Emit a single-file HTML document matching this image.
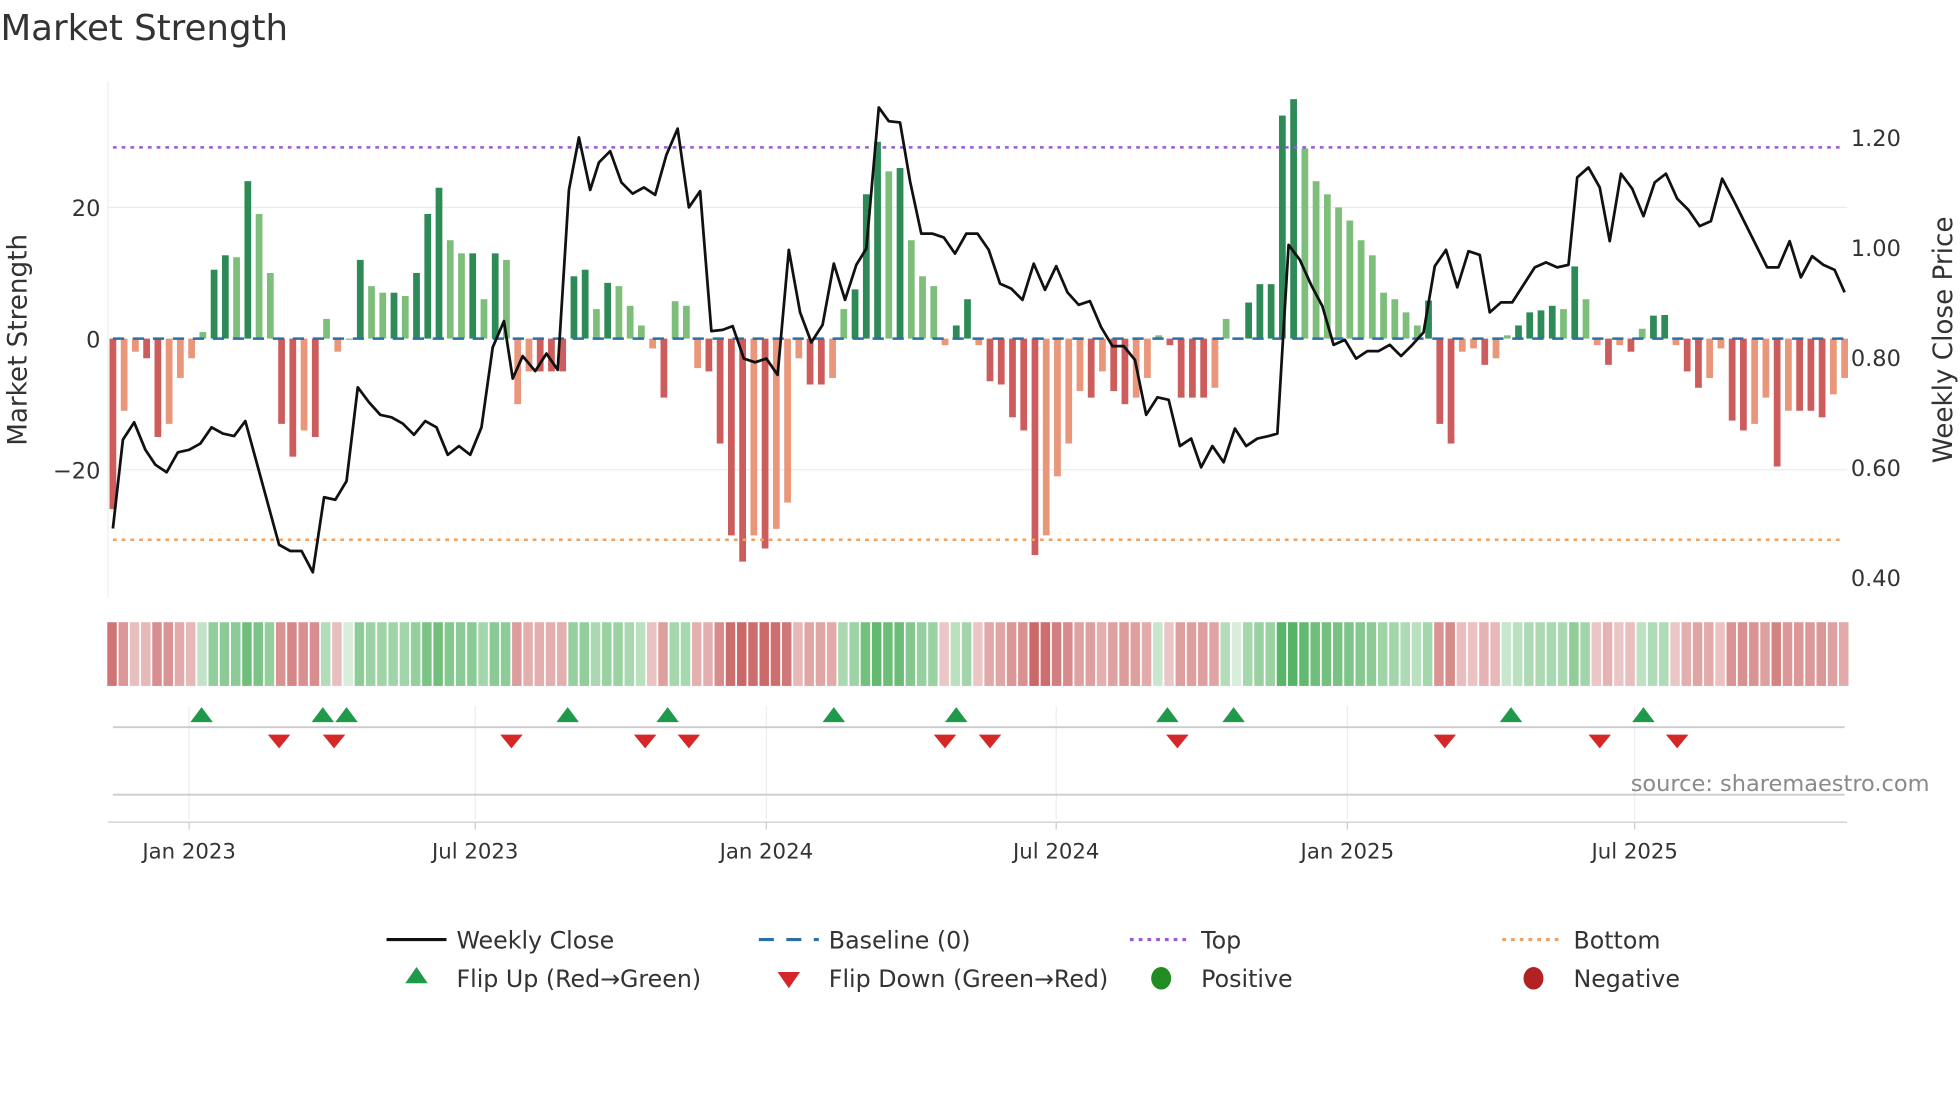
<!DOCTYPE html>
<html><head><meta charset="utf-8"><style>
html,body{margin:0;padding:0;background:#fff;width:1960px;height:1102px;overflow:hidden}
svg{display:block}
text{font-family:"DejaVu Sans","Liberation Sans",sans-serif;fill:#333}
</style></head><body>
<svg id="s" width="1960" height="1102" viewBox="0 0 1568 882" xmlns="http://www.w3.org/2000/svg">
<rect width="1568" height="882" fill="#fff"/>
<text x="0" y="32" font-size="28.5">Market Strength</text>
<g stroke="#ebebeb" stroke-width="1">
<line x1="86" y1="166" x2="1478" y2="166"/><line x1="86" y1="376" x2="1478" y2="376"/>
</g>
<line x1="86" y1="65" x2="86" y2="478" stroke="#eee"/>
<g id="bars"></g>
<line x1="90" y1="118" x2="1476" y2="118" stroke="#9b59d6" stroke-width="2" stroke-dasharray="3,4"/>
<line x1="90" y1="432" x2="1476" y2="432" stroke="#f0a060" stroke-width="2" stroke-dasharray="3,4"/>
<line x1="90" y1="271" x2="1476" y2="271" stroke="#2a6fa6" stroke-width="2" stroke-dasharray="9,7"/>
<polyline id="close" fill="none" stroke="#111" stroke-width="2.2" stroke-linejoin="round"/>
<g font-size="18" text-anchor="end">
<text x="80" y="173">20</text><text x="80" y="278">0</text><text x="80" y="383">−20</text>
</g>
<g font-size="18">
<text x="1481" y="117">1.20</text><text x="1481" y="205">1.00</text><text x="1481" y="293">0.80</text><text x="1481" y="381">0.60</text><text x="1481" y="469">0.40</text>
</g>
<text transform="translate(21,272) rotate(-90)" font-size="21" text-anchor="middle">Market Strength</text>
<text transform="translate(1562,272) rotate(-90)" font-size="21" text-anchor="middle">Weekly Close Price</text>
<g id="heat"></g>
<g stroke="#eee"><line x1="151" y1="565" x2="151" y2="656"/><line x1="380" y1="565" x2="380" y2="656"/><line x1="613" y1="565" x2="613" y2="656"/><line x1="845" y1="565" x2="845" y2="656"/><line x1="1078" y1="565" x2="1078" y2="656"/><line x1="1308" y1="565" x2="1308" y2="656"/></g>
<line x1="90" y1="582" x2="1476" y2="582" stroke="#ccc" stroke-width="1.5"/>
<line x1="90" y1="636" x2="1476" y2="636" stroke="#ccc" stroke-width="1.5"/>
<g id="tri"></g>
<text x="1544" y="633" font-size="18" text-anchor="end" style="fill:#8a8a8a">source: sharemaestro.com</text>
<line x1="86" y1="658" x2="1478" y2="658" stroke="#ccc"/>
<g stroke="#ccc"><line x1="151" y1="658" x2="151" y2="664"/><line x1="380" y1="658" x2="380" y2="664"/><line x1="613" y1="658" x2="613" y2="664"/><line x1="845" y1="658" x2="845" y2="664"/><line x1="1078" y1="658" x2="1078" y2="664"/><line x1="1308" y1="658" x2="1308" y2="664"/></g>
<g font-size="17" text-anchor="middle">
<text x="151" y="687">Jan 2023</text><text x="380" y="687">Jul 2023</text><text x="613" y="687">Jan 2024</text><text x="845" y="687">Jul 2024</text><text x="1078" y="687">Jan 2025</text><text x="1308" y="687">Jul 2025</text>
</g>
<g font-size="19">
<line x1="309" y1="752" x2="357" y2="752" stroke="#111" stroke-width="2.5"/>
<text x="365" y="759">Weekly Close</text>
<line x1="607" y1="752" x2="655" y2="752" stroke="#2a6fa6" stroke-width="2.5" stroke-dasharray="12,10"/>
<text x="663" y="759">Baseline (0)</text>
<line x1="904" y1="752" x2="952" y2="752" stroke="#9b59d6" stroke-width="2.5" stroke-dasharray="3,4"/>
<text x="961" y="759">Top</text>
<line x1="1202" y1="752" x2="1250" y2="752" stroke="#f0a060" stroke-width="2.5" stroke-dasharray="3,4"/>
<text x="1259" y="759">Bottom</text>
<polygon points="333,774 324,787 342,787" fill="#1e9a4a"/>
<text x="365" y="790">Flip Up (Red→Green)</text>
<polygon points="622,778 640,778 631,791" fill="#d62728"/>
<text x="663" y="790">Flip Down (Green→Red)</text>
<ellipse cx="929" cy="783" rx="8" ry="9" fill="#228b22"/>
<text x="961" y="790">Positive</text>
<ellipse cx="1227" cy="783" rx="8" ry="9" fill="#b22222"/>
<text x="1259" y="790">Negative</text>
</g>
</svg>
<script>
var v=[-26,-11,-2,-3,-15,-13,-6,-3,1,10.5,12.7,12.4,24,19,10,-13,-18,-14,-15,3,-2,0,12,8,7,7,6.5,10,19,23,15,13,13,6,13,12,-10,-5,-5,-5,-5,9.5,10.5,4.5,8.5,8,5,2,-1.5,-9,5.7,5,-4.5,-5,-16,-30,-34,-30,-32,-29,-25,-3,-7,-7,-6,4.5,7.5,22,30,25.5,26,15,9.5,8,-1,2,6,-1,-6.5,-7,-12,-14,-33,-30,-21,-16,-8,-9,-5,-8,-10,-9,-6,0.5,-1,-9,-9,-9,-7.5,3,0,5.5,8.3,8.3,34,36.5,29,24,22,20,18,15,12.7,7,6,4,2,5.8,-13,-16,-2,-1.5,-4,-3,0.5,2,4,4.3,5,4.5,11,6,-1,-4,-1,-2,1.5,3.5,3.6,-1,-5,-7.5,-6,-1.5,-12.5,-14,-13,-9,-19.5,-11,-11,-11,-12,-8.5,-6];
var n=v.length,x0=90,x1=1476,dx=(x1-x0)/(n-1),S="http://www.w3.org/2000/svg";
function el(t,a,p){var e=document.createElementNS(S,t);for(var k in a)e.setAttribute(k,a[k]);p.appendChild(e);}
var B=document.getElementById('bars'),H=document.getElementById('heat');
for(var i=0;i<n;i++){var x=x0+i*dx,a=v[i],p=i?v[i-1]:0,inc=Math.abs(a)>=Math.abs(p);
var c=a>=0?(inc?'#2e8b57':'#7dbf7a'):(inc?'#cd5c5c':'#e9967a');
var h=Math.abs(a)*5.25;el('rect',{x:x-2.7,y:a>=0?271-h:271,width:5.4,height:Math.max(h,1),fill:c},B);
var t=Math.min(Math.abs(a)/36,1),al=0.2+0.65*Math.sqrt(t);
el('rect',{x:x-dx/2,y:498,width:dx-1.4,height:51,fill:a>=0?'#3aa64a':'#c04848','fill-opacity':al},H);}
var pts="90,423 98,352 107,338 116,360 124,372 133,378 142,362 151,360 160,355 169,342 178,347 187,349 196,337 205,370 214,403 223,436 232,441 241,441 250,458 259,398 268,400 277,385 286,310 295,322 304,332 313,334 322,339 331,348 340,337 349,342 358,364 367,357 376,364 385,342 394,278 403,257 410,303 418,285 428,297 437,283 446,296 455,152 463,110 472,152 479,130 488,121 497,146 506,155 515,150 524,156 533,124 542,103 551,166 560,153 569,265 578,264 586,261 595,287 604,290 613,287 622,300 631,200 640,250 649,274 658,260 667,211 676,240 685,212 693,199 703,86 711,97 720,98 728,145 737,187 746,187 755,190 764,203 773,187 782,187 791,200 800,227 809,231 818,240 827,211 836,232 845,213 854,234 863,244 872,241 881,262 890,277 899,277 908,288 917,332 926,318 935,320 944,357 953,351 961,374 970,357 979,370 988,343 997,357 1006,351 1015,349 1022,347 1031,196 1040,208 1049,228 1058,245 1067,276 1076,272 1085,287 1094,281 1103,281 1112,276 1121,285 1130,276 1139,266 1148,213 1157,200 1166,230 1175,201 1184,204 1192,250 1201,242 1210,242 1219,228 1228,214 1237,210 1246,214 1255,212 1262,142 1271,134 1280,150 1288,193 1297,139 1306,151 1315,173 1324,146 1333,139 1342,159 1351,168 1360,181 1369,177 1378,143 1387,160 1396,178 1405,196 1414,214 1423,214 1432,193 1441,222 1450,205 1459,212 1468,216 1476,234";
document.getElementById('close').setAttribute('points',pts);
var T=document.getElementById('tri');
[161,258,277,454,534,667,765,934,987,1209,1315].forEach(function(x){el('polygon',{points:(x)+',566 '+(x-9)+',578 '+(x+9)+',578',fill:'#1e9a4a'},T);});
[223,267,409,516,551,756,792,942,1156,1280,1342].forEach(function(x){el('polygon',{points:(x-9)+',588 '+(x+9)+',588 '+x+',599',fill:'#d62728'},T);});
</script>
</body></html>
